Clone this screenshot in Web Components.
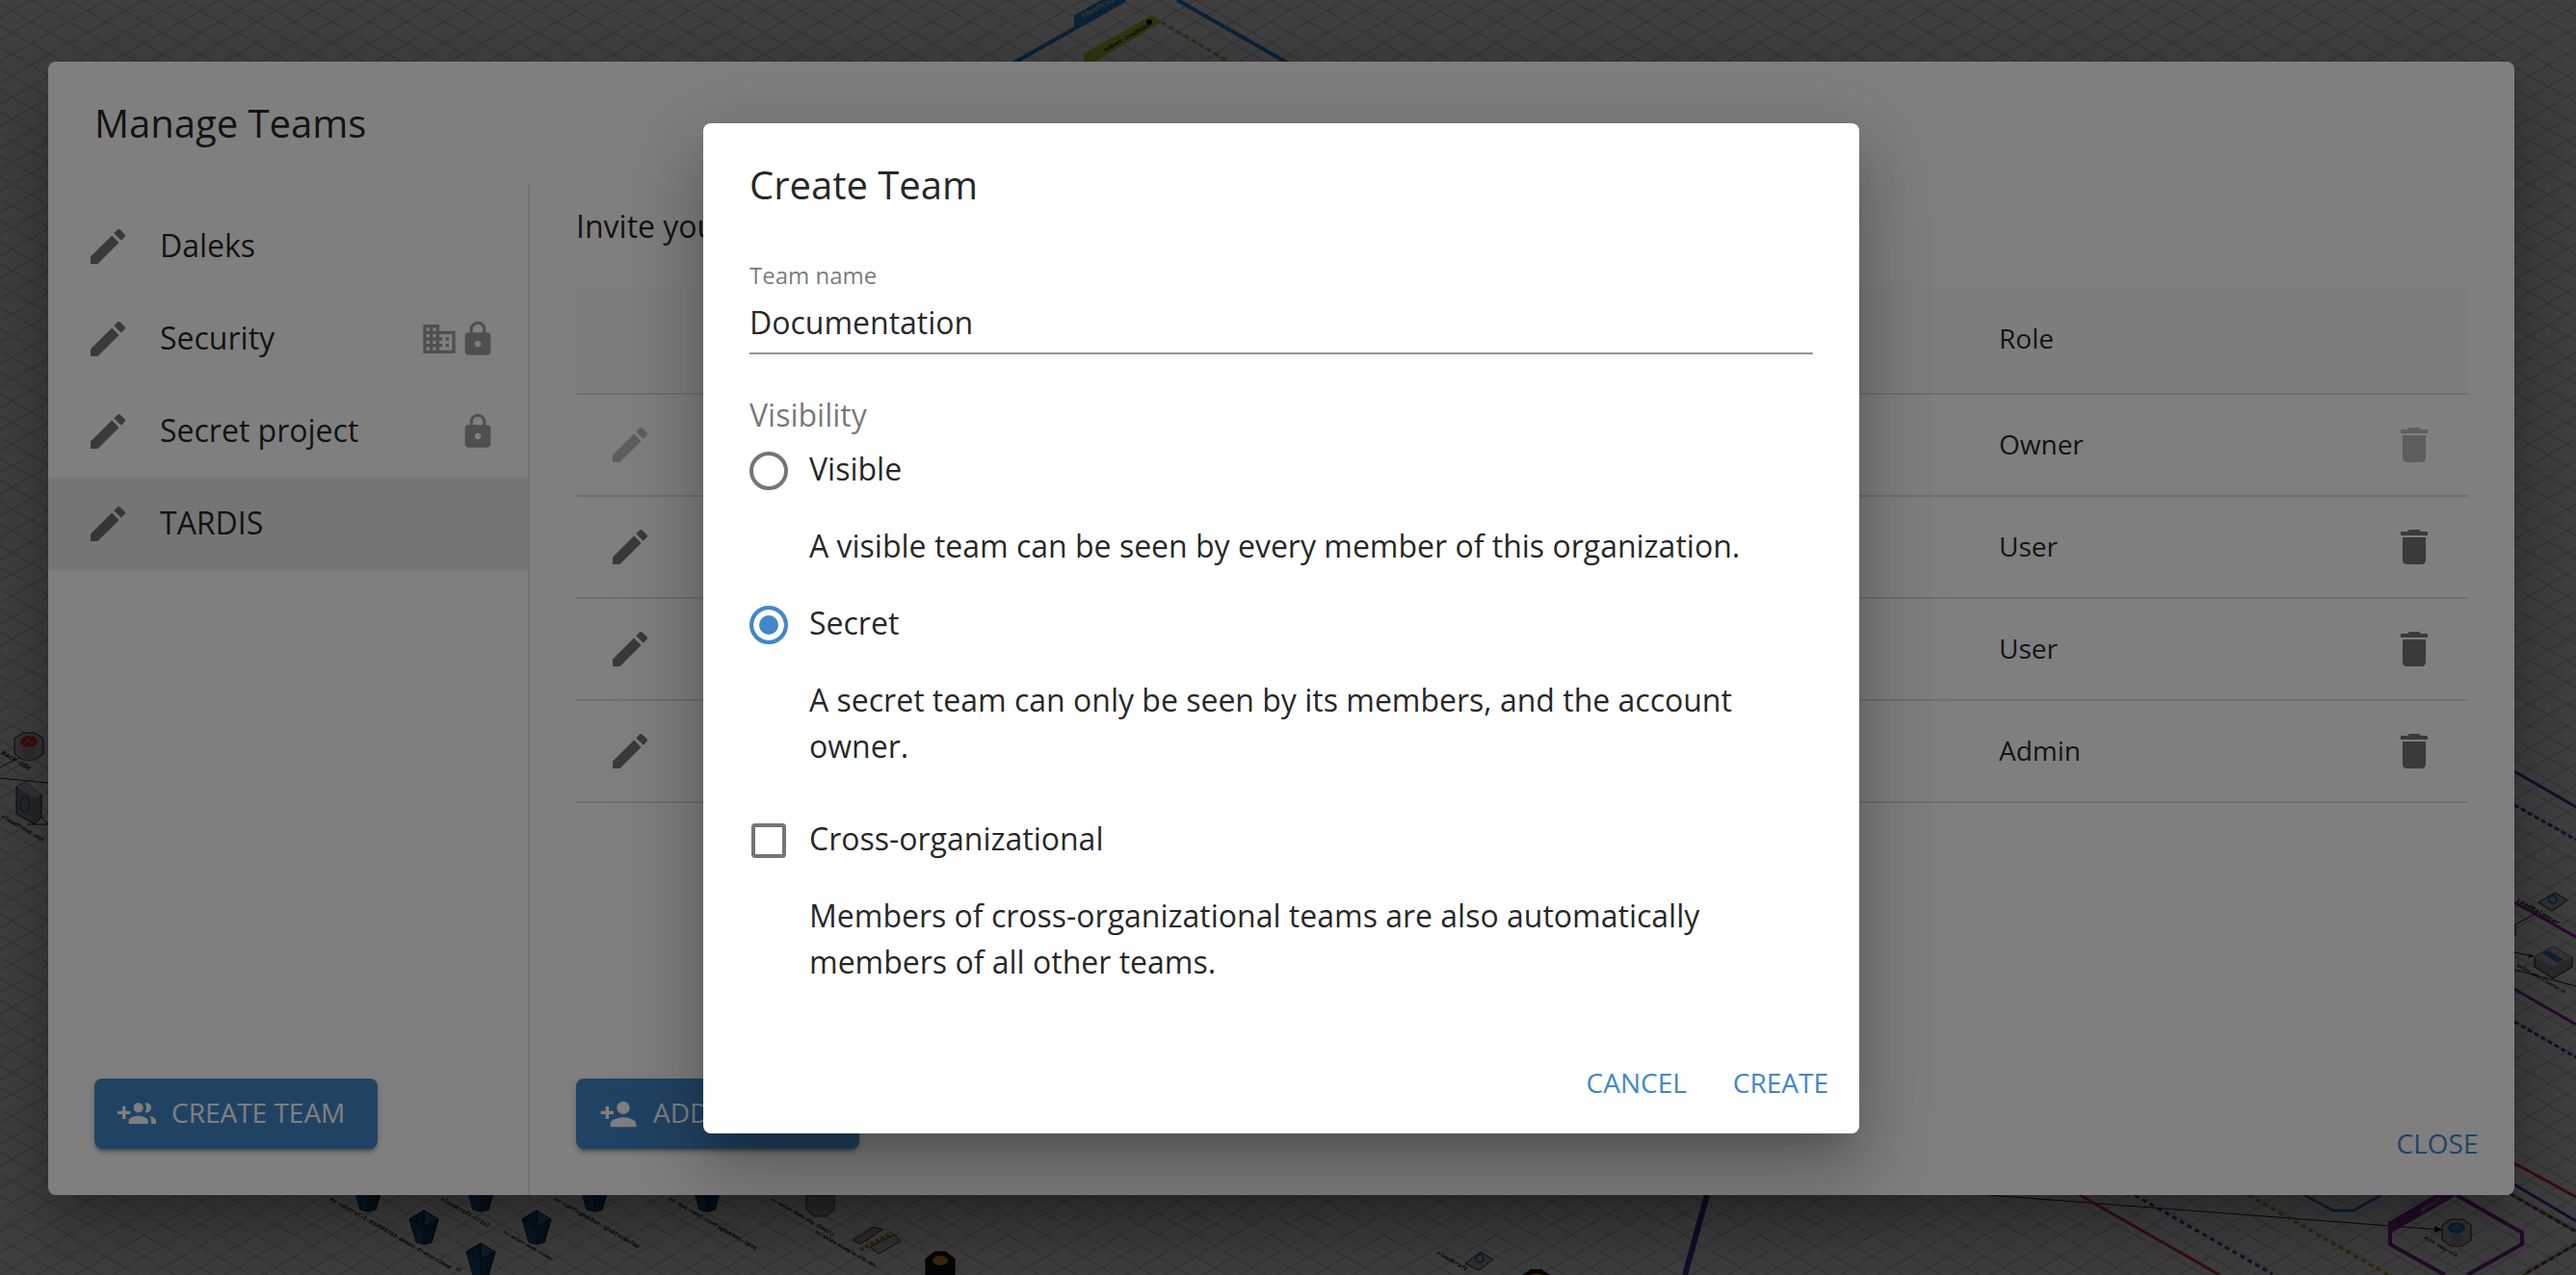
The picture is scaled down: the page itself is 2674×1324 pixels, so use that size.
<!DOCTYPE html>
<html lang="en">
<head>
<meta charset="utf-8">
<meta name="viewport" content="width=device-width, initial-scale=1">
<title>Manage Teams</title>
<style>
  :root {
    --blue: #4287c7;
    --text: rgba(0, 0, 0, .87);
    --muted: rgba(0, 0, 0, .54);
    --divider: rgba(0, 0, 0, .12);
  }
  html, body { margin: 0; height: 100%; overflow: hidden; background: #fff; }
  body { font: 32px/48px "Open Sans", "Noto Sans", sans-serif; color: var(--text); }
</style>
</head>
<body>
<team-app></team-app>

<script>
const ICONS = {
  edit: 'M3 17.25V21h3.75L17.81 9.94l-3.75-3.75L3 17.25zM20.71 7.04c.39-.39.39-1.02 0-1.41l-2.34-2.34c-.39-.39-1.02-.39-1.41 0l-1.83 1.83 3.75 3.75 1.83-1.83z',
  lock: 'M18 8h-1V6c0-2.76-2.24-5-5-5S7 3.24 7 6v2H6c-1.1 0-2 .9-2 2v10c0 1.1.9 2 2 2h12c1.1 0 2-.9 2-2V10c0-1.1-.9-2-2-2zm-6 9c-1.1 0-2-.9-2-2s.9-2 2-2 2 .9 2 2-.9 2-2 2zm3.1-9H8.9V6c0-1.71 1.39-3.1 3.1-3.1 1.71 0 3.1 1.39 3.1 3.1v2z',
  domain: 'M12 7V3H2v18h20V7H12zM6 19H4v-2h2v2zm0-4H4v-2h2v2zm0-4H4V9h2v2zm0-4H4V5h2v2zm4 12H8v-2h2v2zm0-4H8v-2h2v2zm0-4H8V9h2v2zm0-4H8V5h2v2zm10 12h-8v-2h2v-2h-2v-2h2v-2h-2V9h8v10zm-2-8h-2v2h2v-2zm0 4h-2v2h2v-2z',
  delete: 'M6 19c0 1.1.9 2 2 2h8c1.1 0 2-.9 2-2V7H6v12zM19 4h-3.5l-1-1h-5l-1 1H5v2h14V4z',
  groupAdd: 'M8 10H5V7H3v3H0v2h3v3h2v-3h3v-2zm10 1c1.66 0 2.99-1.34 2.99-3S19.66 5 18 5c-.32 0-.63.05-.91.14.57.81.9 1.79.9 2.86s-.34 2.04-.9 2.86c.28.09.59.14.91.14zm-5 0c1.66 0 2.99-1.34 2.99-3S14.66 5 13 5c-1.66 0-3 1.34-3 3s1.34 3 3 3zm6.62 2.16c.83.73 1.38 1.66 1.38 2.84v2h3v-2c0-1.54-2.37-2.49-4.38-2.84zM13 13c-2 0-6 1-6 3v2h12v-2c0-2-4-3-6-3z',
  personAdd: 'M15 12c2.21 0 4-1.79 4-4s-1.79-4-4-4-4 1.79-4 4 1.79 4 4 4zm-9-2V7H4v3H1v2h3v3h2v-3h3v-2H6zm9 4c-2.67 0-8 1.34-8 4v2h16v-2c0-2.66-5.33-4-8-4z'
};

class BaseElement extends HTMLElement {
  connectedCallback() {
    if (this.shadowRoot) return;
    this.attachShadow({ mode: 'open' }).innerHTML = this.render();
  }
}

/* Material icon; size attribute "large" gives 48px, otherwise 40px. */
customElements.define('md-icon', class extends BaseElement {
  render() {
    return `<style>
      :host { display: block; width: 40px; height: 40px; flex: none; }
      :host([size=large]) { width: 48px; height: 48px; }
      svg { display: block; width: 100%; height: 100%; fill: currentColor; }
    </style><svg viewBox="0 0 24 24" aria-hidden="true"><path d="${ICONS[this.getAttribute('name')]}"/></svg>`;
  }
});

customElements.define('icon-button', class extends BaseElement {
  render() {
    return `<style>
      :host { display: block; width: 48px; flex: none; }
      button { display: block; padding: 0; border: 0; background: none; color: var(--muted); cursor: pointer; }
      button:disabled { color: rgba(0, 0, 0, .26); cursor: default; }
    </style><button type="button" aria-label="${this.getAttribute('label')}" ${this.hasAttribute('disabled') ? 'disabled' : ''}>
      <md-icon size="large" name="${this.getAttribute('icon')}"></md-icon></button>`;
  }
});

customElements.define('md-button', class extends BaseElement {
  render() {
    return `<style>
      :host { display: block; flex: none; }
      button {
        display: flex; align-items: center; justify-content: center; gap: 16px;
        min-width: 128px; padding: 12px 16px; border: 0; border-radius: 8px; background: none;
        font: inherit; font-size: 28px; line-height: 49px; color: var(--blue); cursor: pointer;
      }
      :host([contained]) button {
        min-width: 294px; padding: 12px 32px 12px 24px; justify-content: flex-start; color: #fff; background: var(--blue);
        box-shadow: 0 6px 2px -4px rgba(0,0,0,.2), 0 4px 4px rgba(0,0,0,.14), 0 2px 10px rgba(0,0,0,.12);
      }
      :host([contained]) span { line-height: 47px; padding-bottom: 2px; }
    </style><button type="button"><slot name="icon"></slot><span><slot></slot></span></button>`;
  }
});

customElements.define('md-dialog', class extends BaseElement {
  render() {
    return `<style>
      :host {
        position: fixed; inset: 0; box-sizing: border-box; padding: 0 14px 19px 0;
        display: grid; place-items: center; background: rgba(0, 0, 0, .5);
      }
      section {
        box-sizing: border-box; width: calc(100% - 100px); max-width: 1200px;
        display: flex; flex-direction: column; background: #fff; border-radius: 8px; overflow: hidden;
        box-shadow: 0 22px 30px -14px rgba(0,0,0,.2), 0 48px 76px 6px rgba(0,0,0,.14), 0 18px 92px 16px rgba(0,0,0,.12);
      }
      :host([wide]) section { max-width: 2560px; height: calc(100% - 128px); }
      h2 { margin: 0; padding: 32px 48px; font-size: 40px; line-height: 64px; font-weight: 400; }
      .body { flex: 1; min-height: 0; display: grid; }
    </style>
    <section role="dialog" aria-label="${this.getAttribute('heading')}">
      <h2>${this.getAttribute('heading')}</h2>
      <div class="body"><slot></slot></div>
    </section>`;
  }
});

customElements.define('team-item', class extends BaseElement {
  render() {
    return `<style>
      :host { display: flex; align-items: center; height: 96px; padding: 0 32px 0 38px; }
      :host([selected]) { background: rgba(0, 0, 0, .08); }
      .name { flex: 1; margin-left: 30px; padding-bottom: 2px; }
      .flags { display: flex; color: rgba(0, 0, 0, .38); }
    </style>
    <icon-button icon="edit" label="Edit team"></icon-button>
    <span class="name"><slot></slot></span>
    <span class="flags"><slot name="flags"></slot></span>`;
  }
});

customElements.define('team-sidebar', class extends BaseElement {
  render() {
    return `<style>
      :host { display: flex; flex-direction: column; justify-content: space-between; border-right: 2px solid var(--divider); padding: 16px 0 48px; }
      footer { display: flex; padding-left: 48px; }
    </style>
    <nav aria-label="Teams">
      <team-item>Daleks</team-item>
      <team-item>Security<md-icon slot="flags" name="domain"></md-icon><md-icon slot="flags" name="lock"></md-icon></team-item>
      <team-item>Secret project<md-icon slot="flags" name="lock"></md-icon></team-item>
      <team-item selected>TARDIS</team-item>
    </nav>
    <footer><md-button contained><md-icon slot="icon" name="groupAdd"></md-icon>CREATE TEAM</md-button></footer>`;
  }
});

customElements.define('member-table', class extends BaseElement {
  render() {
    const rows = ['Owner', 'User', 'User', 'Admin'].map(role => {
      const off = role === 'Owner' ? 'disabled' : '';
      return `<tr><td><icon-button icon="edit" label="Edit member" ${off}></icon-button></td><td></td><td class="text">${role}</td>
        <td><icon-button icon="delete" label="Remove member" ${off}></icon-button></td></tr>`;
    }).join('');
    return `<style>
      :host { display: block; }
      table { width: 100%; table-layout: fixed; border-collapse: separate; border-spacing: 0; font-size: 28px; line-height: 48px; }
      th, td { box-sizing: border-box; height: 106px; padding: 0 32px; text-align: left; font-weight: 400; border-bottom: 2px solid #e0e0e0; }
      th { height: 114px; background: #fafafa; }
      .text { padding-bottom: 2px; }
      .tool { width: 112px; }
      .role { width: 407px; }
    </style>
    <table>
      <colgroup><col class="tool"><col><col class="role"><col class="tool"></colgroup>
      <thead><tr><th></th><th></th><th class="text">Role</th><th></th></tr></thead>
      <tbody>${rows}</tbody>
    </table>`;
  }
});

customElements.define('team-members', class extends BaseElement {
  render() {
    return `<style>
      :host { display: flex; flex-direction: column; min-width: 0; }
      .list { flex: 1; padding: 20px 48px 0; }
      p { margin: 0 0 38px; line-height: 46px; }
      footer { display: flex; align-items: flex-start; justify-content: space-between; padding: 0 16px 17px 48px; }
      .close { padding-top: 31px; }
    </style>
    <div class="list">
      <p>Invite your</p>
      <member-table></member-table>
    </div>
    <footer>
      <md-button contained><md-icon slot="icon" name="personAdd"></md-icon>ADD MEMBER</md-button>
      <md-button class="close">CLOSE</md-button>
    </footer>`;
  }
});

customElements.define('manage-teams', class extends BaseElement {
  render() {
    return `<style>
      :host { display: grid; grid-template-columns: 500px minmax(0, 1fr); }
    </style><team-sidebar></team-sidebar><team-members></team-members>`;
  }
});

/* Row with a radio or tick box, its label and a longer explanation. */
customElements.define('choice-row', class extends BaseElement {
  render() {
    return `<style>
      :host { display: grid; grid-template-columns: 40px minmax(0, 1fr); column-gap: 22px; row-gap: 32px; }
      .control { display: grid; place-items: center; height: 40px; padding: 6px 0 2px; }
      .help { grid-column: 2; }
      ::slotted(input) { appearance: none; box-sizing: border-box; margin: 0; border: 4px solid #757575; background: #fff; }
      ::slotted(input[type=radio]) { width: 40px; height: 40px; border-radius: 50%; }
      ::slotted(input[type=radio]:checked) { border-color: var(--blue); background: var(--blue); box-shadow: inset 0 0 0 6px #fff; }
      ::slotted(input[type=checkbox]) { width: 36px; height: 36px; border-radius: 4px; }
    </style>
    <span class="control"><slot name="control"></slot></span>
    <span><slot name="label"></slot></span>
    <span class="help"><slot></slot></span>`;
  }
});

customElements.define('create-team', class extends BaseElement {
  render() {
    return `<style>
      :host { display: block; }
      .fields { padding: 17px 48px 0; }
      .caption { display: block; font-size: 24px; line-height: 26px; color: var(--muted); }
      .text {
        display: block; box-sizing: border-box; width: 100%; height: 69px; padding: 16px 0 13px; margin-bottom: 47px;
        border: 0; border-bottom: 2px solid #949494; outline: 0; background: none;
        font: inherit; line-height: 38px; color: inherit;
      }
      fieldset { margin: 0 0 48px; padding: 0; border: 0; min-width: 0; }
      legend { padding: 0; margin-bottom: 16px; line-height: 32px; color: var(--muted); }
      .options { display: grid; row-gap: 32px; }
      footer { display: flex; justify-content: flex-end; gap: 16px; padding: 65px 16px 16px; }
    </style>
    <div class="fields">
      <label class="caption" for="name">Team name</label>
      <input class="text" id="name" type="text" value="Documentation">
      <fieldset>
        <legend>Visibility</legend>
        <div class="options">
          <choice-row>
            <input slot="control" type="radio" name="visibility" id="visible">
            <label slot="label" for="visible">Visible</label>
            A visible team can be seen by every member of this organization.
          </choice-row>
          <choice-row>
            <input slot="control" type="radio" name="visibility" id="secret" checked>
            <label slot="label" for="secret">Secret</label>
            A secret team can only be seen by its members, and the account owner.
          </choice-row>
        </div>
      </fieldset>
      <choice-row>
        <input slot="control" type="checkbox" id="cross">
        <label slot="label" for="cross">Cross-organizational</label>
        Members of cross-organizational teams are also automatically members of all other teams.
      </choice-row>
    </div>
    <footer><md-button>CANCEL</md-button><md-button>CREATE</md-button></footer>`;
  }
});

/* Isometric infrastructure diagram that lies under the dialogs. */
customElements.define('iso-diagram', class extends BaseElement {
  render() {
    const label = (x, y, text, size = 8, deg = 30, fill = '#000') =>
      `<text transform="translate(${x} ${y}) rotate(${deg})" font-size="${size}" fill="${fill}">${text}</text>`;
    const line = (d, color, width = 3, dash = '') =>
      `<path d="${d}" fill="none" stroke="${color}" stroke-width="${width}" ${dash ? `stroke-dasharray="${dash}"` : ''}/>`;
    const gem = (x, y) => `<g transform="translate(${x} ${y})" stroke="#123" stroke-width="1">
      <path d="M0 0L15 9L8 33L0 35L-8 33L-15 9Z" fill="#1d5a96"/>
      <path d="M0 0L15 9L0 17Z" fill="#2c78bd"/><path d="M0 0L-15 9L0 17Z" fill="#174a7c"/>
      <path d="M0 17L15 9L8 33L0 35Z" fill="#18456f"/></g>`;
    const drum = (x, y, body, side, cap) => `<g transform="translate(${x} ${y})">
      <path d="M-6 -14H6L15 -8V8L6 14H-6L-15 8V-8Z" fill="${body}" stroke="#222" stroke-width="1"/>
      <path d="M-6 2H6V14H-6Z" fill="${side}"/><ellipse cy="-5" rx="9" ry="6" fill="${cap}"/>
      <path d="M-4 -3L0 -8L1 -4L5 -4" fill="none" stroke="#fff" stroke-opacity=".6" stroke-width="1"/></g>`;
    return `<style>
      :host { position: fixed; inset: 0; display: block; }
      svg { display: block; width: 100%; height: 100%; font-family: "Liberation Mono", monospace; font-style: italic; font-weight: 700; }
    </style>
    <svg viewBox="0 0 2674 1324" preserveAspectRatio="xMinYMin slice" aria-hidden="true">
      <defs><pattern id="grid" x="12.8" y="11.2" width="39" height="22.5" patternUnits="userSpaceOnUse">
        <path d="M0 0L39 22.5M39 0L0 22.5" stroke="#d4d4d4" stroke-width="1.4"/></pattern></defs>
      <rect width="2674" height="1324" fill="#fff"/><rect width="2674" height="1324" fill="url(#grid)"/>

      ${line('M1053 65L1168 0M1222 0L1336 65', '#2a8be0', 4)}
      <path d="M1115 16L1143 0H1168L1115 28Z" fill="#2a8be0"/>
      ${label(1124, 20, 'TheVPCwithTra', 8, -30, '#ddd')}
      <path d="M1125 56L1195 16L1206 23L1135 65H1125Z" fill="#c2d83a"/>
      ${label(1147, 54, 'subnet-2ca251b2', 6, -30)}<circle cx="1193" cy="23" r="3" fill="#111"/>
      ${line('M1206 23L1277 65', '#a8c03a', 3, '5 4')}

      ${line('M0 808L50 813M0 797L22 786M28 856H50L42 847', '#222', 1)}
      ${drum(30, 775, '#ccc', '#b4b4b4', '#e23b34')}
      <path d="M17 817L26 812L43 825V849L36 856L17 845Z" fill="#9a9a9a" stroke="#222" stroke-width="1"/>
      <path d="M17 817L26 812L43 825L36 829Z" fill="#d0d0d0"/>
      <ellipse cx="26" cy="835" rx="5" ry="8" fill="none" stroke="#2a7fd0" stroke-width="2"/>
      ${label(1, 783, 'back-cdn', 7)}${label(1, 849, 'cloudfront.net', 6)}

      ${[[382, 1223], [499, 1223], [617, 1223], [734, 1223], [440, 1257], [557, 1257], [499, 1291]].map(p => gem(...p)).join('')}
      ${label(342, 1246, 'eu-central-1-933505763-demos-transcribed', 6)}
      ${label(457, 1246, 'cloudcraft-trial', 6)}
      ${label(522, 1280, 'cc-sales-demo-video', 5)}
      ${label(575, 1246, 'cc-configbucket-1psktszbufbp', 6)}
      ${label(694, 1246, 'ct-bus-west-configbucket-1psk', 6)}
      ${label(800, 1246, 'cc-sales-demo-asg (Email)', 5)}
      ${label(846, 1280, 'cc-sales-example-elb-dev', 5)}
      ${label(473, 1318, 'cc', 5)}
      <path d="M837 1241H866V1256L858 1263H845L837 1256Z" fill="#b0b0b0" stroke="#444"/>
      <path d="M885 1288L907 1274L916 1277L893 1292Z" fill="#b8b8b8" stroke="#333"/>
      <path d="M903 1295L928 1282L935 1289L912 1302Z" fill="#d0d0d0" stroke="#333"/>
      ${line('M893 1298L926 1280', '#c98a2a', 4, '4 2')}
      <path d="M961 1307L970 1300H982L991 1307V1324H961Z" fill="#161616" stroke="#000"/>
      <ellipse cx="976" cy="1309" rx="8" ry="5" fill="#e8a030"/>
      <path d="M1521 1312L1537 1300L1550 1308L1535 1319Z" fill="#c4c4c4" stroke="#222"/>
      <circle cx="1536" cy="1307" r="4" fill="none" stroke="#2a7fd0" stroke-width="2"/>
      ${label(1491, 1302, 'cloudcraft', 6)}
      <path d="M1580 1324L1589 1318H1600L1609 1324Z" fill="#161616"/><path d="M1588 1324A8 3 0 0 1 1602 1324Z" fill="#e8a030"/>
      ${line('M1772 1241L1749 1324', '#5432b4', 6)}

      ${line('M2064 1241L2533 1277', '#222', 1)}<path d="M2527 1273L2536 1277L2526 1280L2528 1277Z" fill="#111"/>
      ${line('M2159 1241L2304 1324M2610 1208L2674 1243', '#d83a34')}
      ${line('M2216 1241L2359 1323', '#5432b4', 3, '5 4')}
      ${line('M2334 1241L2479 1324', '#c89a20', 3, '5 4')}
      ${line('M2392 1241L2422 1257H2443L2472 1241', '#2a8be0')}
      ${line('M2610 1230L2674 1268M2610 801L2674 838', '#5432b4')}
      ${line('M2606 1240L2674 1279M2674 1292L2619 1324', '#c89a20')}
      ${line('M2606 1240L2674 1279M2674 1292L2619 1324', '#5432b4', 3, '5 4')}
      ${line('M2538 1324L2481 1292V1268M2550 1241L2618 1280V1292L2561 1324', '#8a2aa8', 4)}
      <path d="M2481 1268L2527 1241H2550L2481 1281Z" fill="#8a2aa8"/>
      ${label(2514, 1259, 'default', 6, -32, '#ddd')}
      ${drum(2550, 1280, '#ccc', '#b4b4b4', '#3a86cc')}
      ${label(2516, 1286, 'With copy-elb', 5)}

      ${line('M2610 836L2674 872M2610 1061L2674 1098', '#3a46b4', 3, '5 3')}
      ${line('M2610 937L2674 973M2610 1027L2674 1064', '#9a2ab0')}
      ${line('M2610 989L2630 993M2610 1007L2674 1024M2611 971V960L2635 947', '#222', 1)}
      <path d="M2635 937L2652 927L2665 935L2649 946Z" fill="#c4c4c4" stroke="#222"/>
      <circle cx="2650" cy="934" r="4" fill="none" stroke="#2a7fd0" stroke-width="2"/>
      <path d="M2631 994L2650 983L2670 994V1004L2650 1016L2631 1004Z" fill="#a8a8a8" stroke="#111"/>
      <path d="M2631 994L2650 983L2670 994L2650 1004Z" fill="#d8d8d8"/>
      <path d="M2639 990L2645 987L2661 996L2655 1000Z" fill="#3a86cc"/>
      <path d="M2624 990L2631 993L2624 995L2626 992Z" fill="#111"/>
      ${label(2612, 936, 'LoadBalancer', 7)}${label(2612, 1003, 'sales-eks-cluster-d', 5)}
    </svg>`;
  }
});

customElements.define('team-app', class extends BaseElement {
  render() {
    return `<style>:host { display: block; }</style>
    <iso-diagram></iso-diagram>
    <md-dialog wide heading="Manage Teams"><manage-teams></manage-teams></md-dialog>
    <md-dialog heading="Create Team"><create-team></create-team></md-dialog>`;
  }
});
</script>
</body>
</html>
